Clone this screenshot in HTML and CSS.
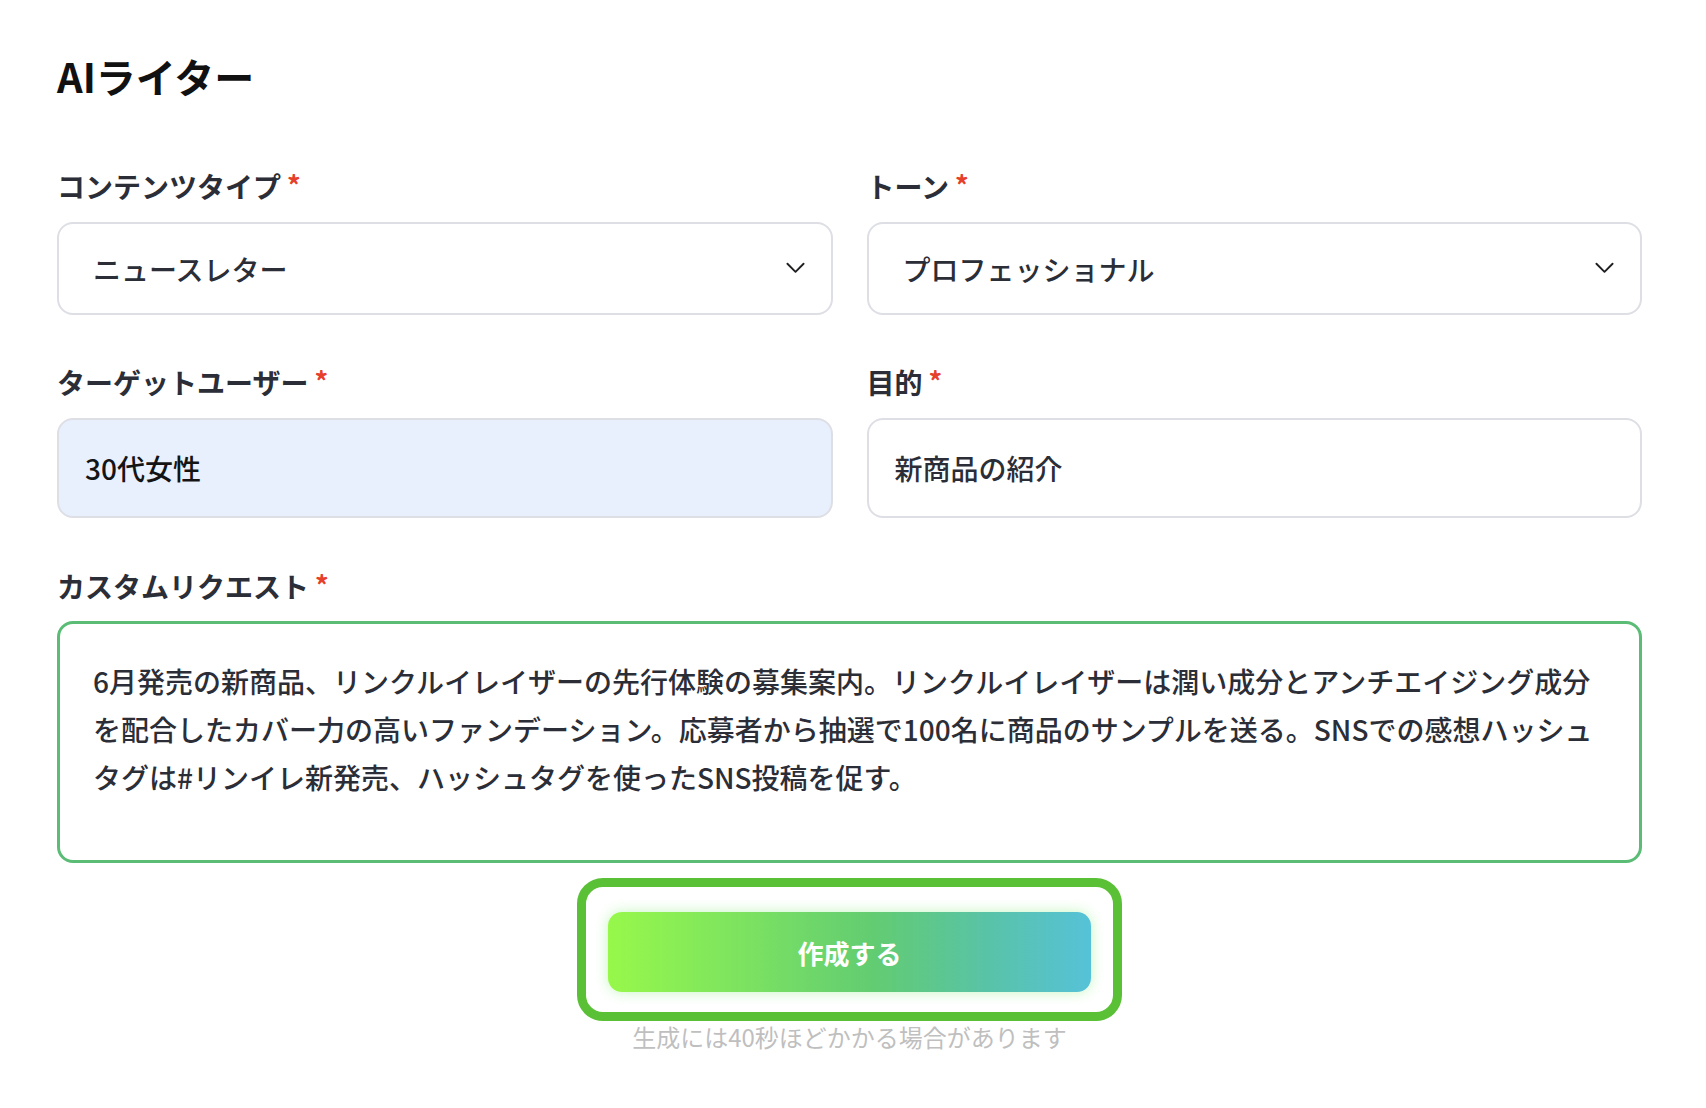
FILE: index.html
```html
<!DOCTYPE html>
<html lang="ja">
<head>
<meta charset="utf-8">
<title>AIライター</title>
<link rel="stylesheet" href="styles.css">
</head>
<body>
<main class="page">
  <h1 class="title">AIライター</h1>
  <form class="form">
    <div class="grid">
      <div class="field">
        <label class="label" for="type">コンテンツタイプ<span class="req">*</span></label>
        <div class="select-wrap">
          <select id="type" class="control select">
            <option>ニュースレター</option>
          </select>
          <svg class="chev" viewBox="0 0 20 12" aria-hidden="true"><path d="M1.5 1.5 L10 10 L18.5 1.5" fill="none" stroke="#1f1f22" stroke-width="2" stroke-linecap="round" stroke-linejoin="round"/></svg>
        </div>
      </div>
      <div class="field">
        <label class="label" for="tone">トーン<span class="req">*</span></label>
        <div class="select-wrap">
          <select id="tone" class="control select">
            <option>プロフェッショナル</option>
          </select>
          <svg class="chev" viewBox="0 0 20 12" aria-hidden="true"><path d="M1.5 1.5 L10 10 L18.5 1.5" fill="none" stroke="#1f1f22" stroke-width="2" stroke-linecap="round" stroke-linejoin="round"/></svg>
        </div>
      </div>
      <div class="field">
        <label class="label" for="target">ターゲットユーザー<span class="req">*</span></label>
        <input id="target" class="control input input-filled" type="text" value="30代女性">
      </div>
      <div class="field">
        <label class="label" for="purpose">目的<span class="req">*</span></label>
        <input id="purpose" class="control input" type="text" value="新商品の紹介">
      </div>
    </div>
    <div class="field field-full">
      <label class="label label-tight" for="request">カスタムリクエスト<span class="req">*</span></label>
      <textarea id="request" class="textarea">6月発売の新商品、リンクルイレイザーの先行体験の募集案内。リンクルイレイザーは潤い成分とアンチエイジング成分を配合したカバー力の高いファンデーション。応募者から抽選で100名に商品のサンプルを送る。SNSでの感想ハッシュタグは#リンイレ新発売、ハッシュタグを使ったSNS投稿を促す。</textarea>
    </div>
    <div class="actions">
      <div class="ring">
        <button type="button" class="btn">作成する</button>
      </div>
      <p class="note">生成には40秒ほどかかる場合があります</p>
    </div>
  </form>
</main>
</body>
</html>
```

FILE: styles.css
```css
* {
  box-sizing: border-box;
}

html, body {
  margin: 0;
  padding: 0;
  background: #ffffff;
}

body {
  font-family: "Noto Sans CJK JP", "Noto Sans", sans-serif;
  color: #2c2e37;
}

.page {
  padding: 52px 64px 0 57px;
}

.title {
  margin: 0 0 65px;
  font-size: 40px;
  line-height: 48px;
  font-weight: 700;
  color: #111111;
}

.form {
  margin: 0;
}

.grid {
  display: grid;
  grid-template-columns: 1fr 1fr;
  column-gap: 34px;
  row-gap: 46px;
}

.field {
  display: flex;
  flex-direction: column;
}

.field-full {
  margin-top: 47px;
}

.label {
  display: block;
  font-size: 28px;
  line-height: 40px;
  font-weight: 700;
  color: #2c2e37;
  margin-bottom: 16px;
}

.label-tight {
  margin-bottom: 15px;
}

.req {
  color: #e6402d;
  font-size: 27px;
  font-weight: 700;
  vertical-align: 2px;
  margin-left: 6px;
}

.select-wrap {
  position: relative;
}

.control {
  display: block;
  width: 100%;
  margin: 0;
  border: 2px solid #dedfe5;
  border-radius: 16px;
  background: #ffffff;
  font-family: "Noto Sans CJK JP", "Noto Sans", sans-serif;
  font-size: 28px;
  font-weight: 500;
  color: #2c2e37;
  outline: none;
}

.select {
  height: 93px;
  padding: 0 70px 0 34px;
  appearance: none;
  -webkit-appearance: none;
}

.chev {
  position: absolute;
  right: 28px;
  top: 50%;
  width: 19px;
  height: 12px;
  margin-top: -7px;
  pointer-events: none;
}

.input {
  height: 100px;
  padding: 0 26px;
}

.input-filled {
  background: #e8f0fe;
  color: #141414;
}

.textarea {
  display: block;
  width: 100%;
  height: 242px;
  margin: 0;
  padding: 33px 33px;
  border: 3px solid #5bbc76;
  border-radius: 16px;
  background: #ffffff;
  font-family: "Noto Sans CJK JP", "Noto Sans", sans-serif;
  font-size: 28px;
  line-height: 48px;
  font-weight: 500;
  color: #2c2e37;
  resize: none;
  outline: none;
  overflow: hidden;
}

.actions {
  display: flex;
  flex-direction: column;
  align-items: center;
  margin-top: 15px;
}

.ring {
  padding: 25px 22px 20px;
  border: 9px solid #5ac036;
  border-radius: 26px;
}

.btn {
  display: block;
  width: 483px;
  height: 80px;
  border: 0;
  border-radius: 14px;
  background: linear-gradient(90deg, #97f84a 0%, #7ae162 30%, #62cc72 55%, #59c3a6 78%, #56c2d8 100%);
  box-shadow: 0 0 14px rgba(150, 240, 140, 0.55);
  font-family: "Noto Sans CJK JP", "Noto Sans", sans-serif;
  font-size: 26px;
  font-weight: 700;
  color: #ffffff;
  cursor: pointer;
}

.note {
  margin: 3px 0 0;
  font-size: 24px;
  line-height: 26px;
  color: #bfbfbf;
}
```
